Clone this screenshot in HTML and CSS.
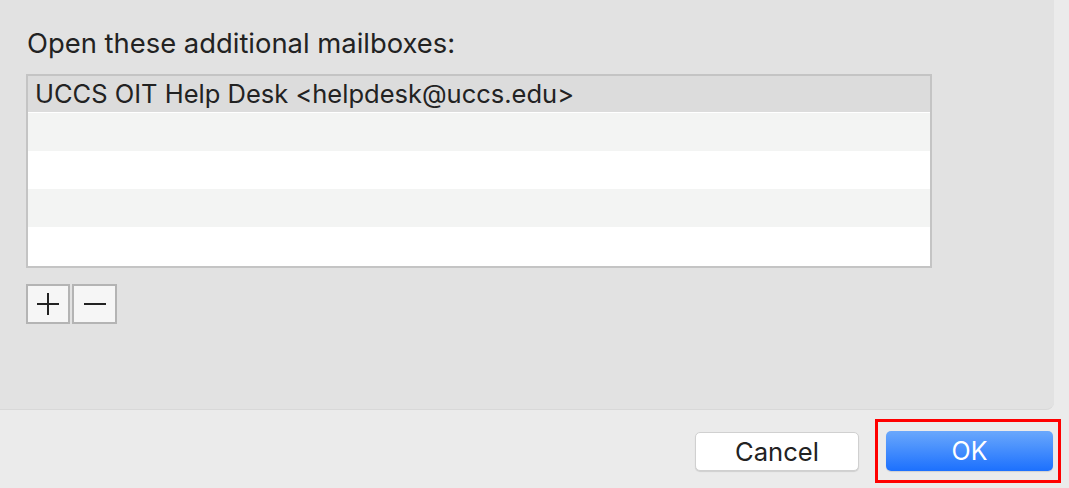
FILE: index.html
```html
<!DOCTYPE html>
<html lang="en">
<head>
    <meta charset="UTF-8">
    <title>Mailboxes</title>
    <link rel="stylesheet" href="styles.css">
</head>
<body>
<div class="panel">
    <p class="label">Open these additional mailboxes:</p>
    <ul class="list">
        <li class="row selected">UCCS OIT Help Desk &lt;helpdesk@uccs.edu&gt;</li>
        <li class="row alt"></li>
        <li class="row"></li>
        <li class="row alt"></li>
        <li class="row"></li>
    </ul>
    <div class="tools">
        <span class="tool">
            <svg width="22" height="22" viewBox="0 0 22 22"><path d="M11 0V22M0 11H22" stroke="#222" stroke-width="2"/></svg>
        </span>
        <span class="tool">
            <svg width="22" height="22" viewBox="0 0 22 22"><path d="M0 11H22" stroke="#222" stroke-width="2"/></svg>
        </span>
    </div>
</div>
<div class="footer">
    <span class="btn">Cancel</span>
    <span class="ok-wrap"><span class="btn ok">OK</span></span>
</div>
</body>
</html>
```
FILE: styles.css
```css
*{
    margin:0;
    padding:0;
    list-style: none;
    box-sizing: border-box;
}
body{
    background: #ebebeb;
    font-family: Inter, "Liberation Sans", Arial, sans-serif;
    color: #222;
    width: 1069px;
    height: 488px;
    overflow: hidden;
}
.panel{
    width: 1054px;
    height: 410px;
    background: #e2e2e2;
    border-bottom-right-radius: 8px;
    border-bottom: 1px solid #d8d8d8;
    padding: 27px 0 0 26px;
}
.label{
    font-size: 27.4px;
    line-height: 32px;
    padding-left: 1px;
    margin-bottom: 15px;
}
.list{
    width: 906px;
    height: 194px;
    border: 2px solid #c4c4c4;
    background: #fff;
}
.row{
    height: 38px;
    font-size: 25.5px;
    line-height: 36px;
    padding-left: 7px;
}
.row.selected{
    height: 37px;
    background: #dcdcdc;
    border-bottom: 1px solid #fff;
}
.row.alt{
    background: #f3f4f3;
}
.tools{
    display: flex;
    gap: 2px;
    margin-top: 16px;
}
.tool{
    width: 45px;
    height: 40px;
    border: 2px solid #b4b4b4;
    background: #f6f6f6;
    display: flex;
    align-items: center;
    justify-content: center;
}
.tool:first-child{
    width: 44px;
}
.footer{
    display: flex;
    justify-content: flex-end;
    align-items: center;
    gap: 16px;
    padding: 9px 8px 0 0;
}
.btn{
    display: block;
    width: 164px;
    height: 39px;
    background: #fff;
    border: 1px solid #d0d0d0;
    border-radius: 5px;
    box-shadow: 0 1px 1px rgba(0,0,0,0.12);
    text-align: center;
    font-size: 25.6px;
    line-height: 37px;
    color: #222;
}
.ok-wrap{
    border: 3px solid #ff0000;
    padding: 9px 5px 9px 8px;
}
.btn.ok{
    width: 167px;
    height: 40px;
    border: none;
    background: linear-gradient(#6aa8fc, #1c70fe);
    color: #fff;
    font-size: 25px;
    line-height: 40px;
}
```
